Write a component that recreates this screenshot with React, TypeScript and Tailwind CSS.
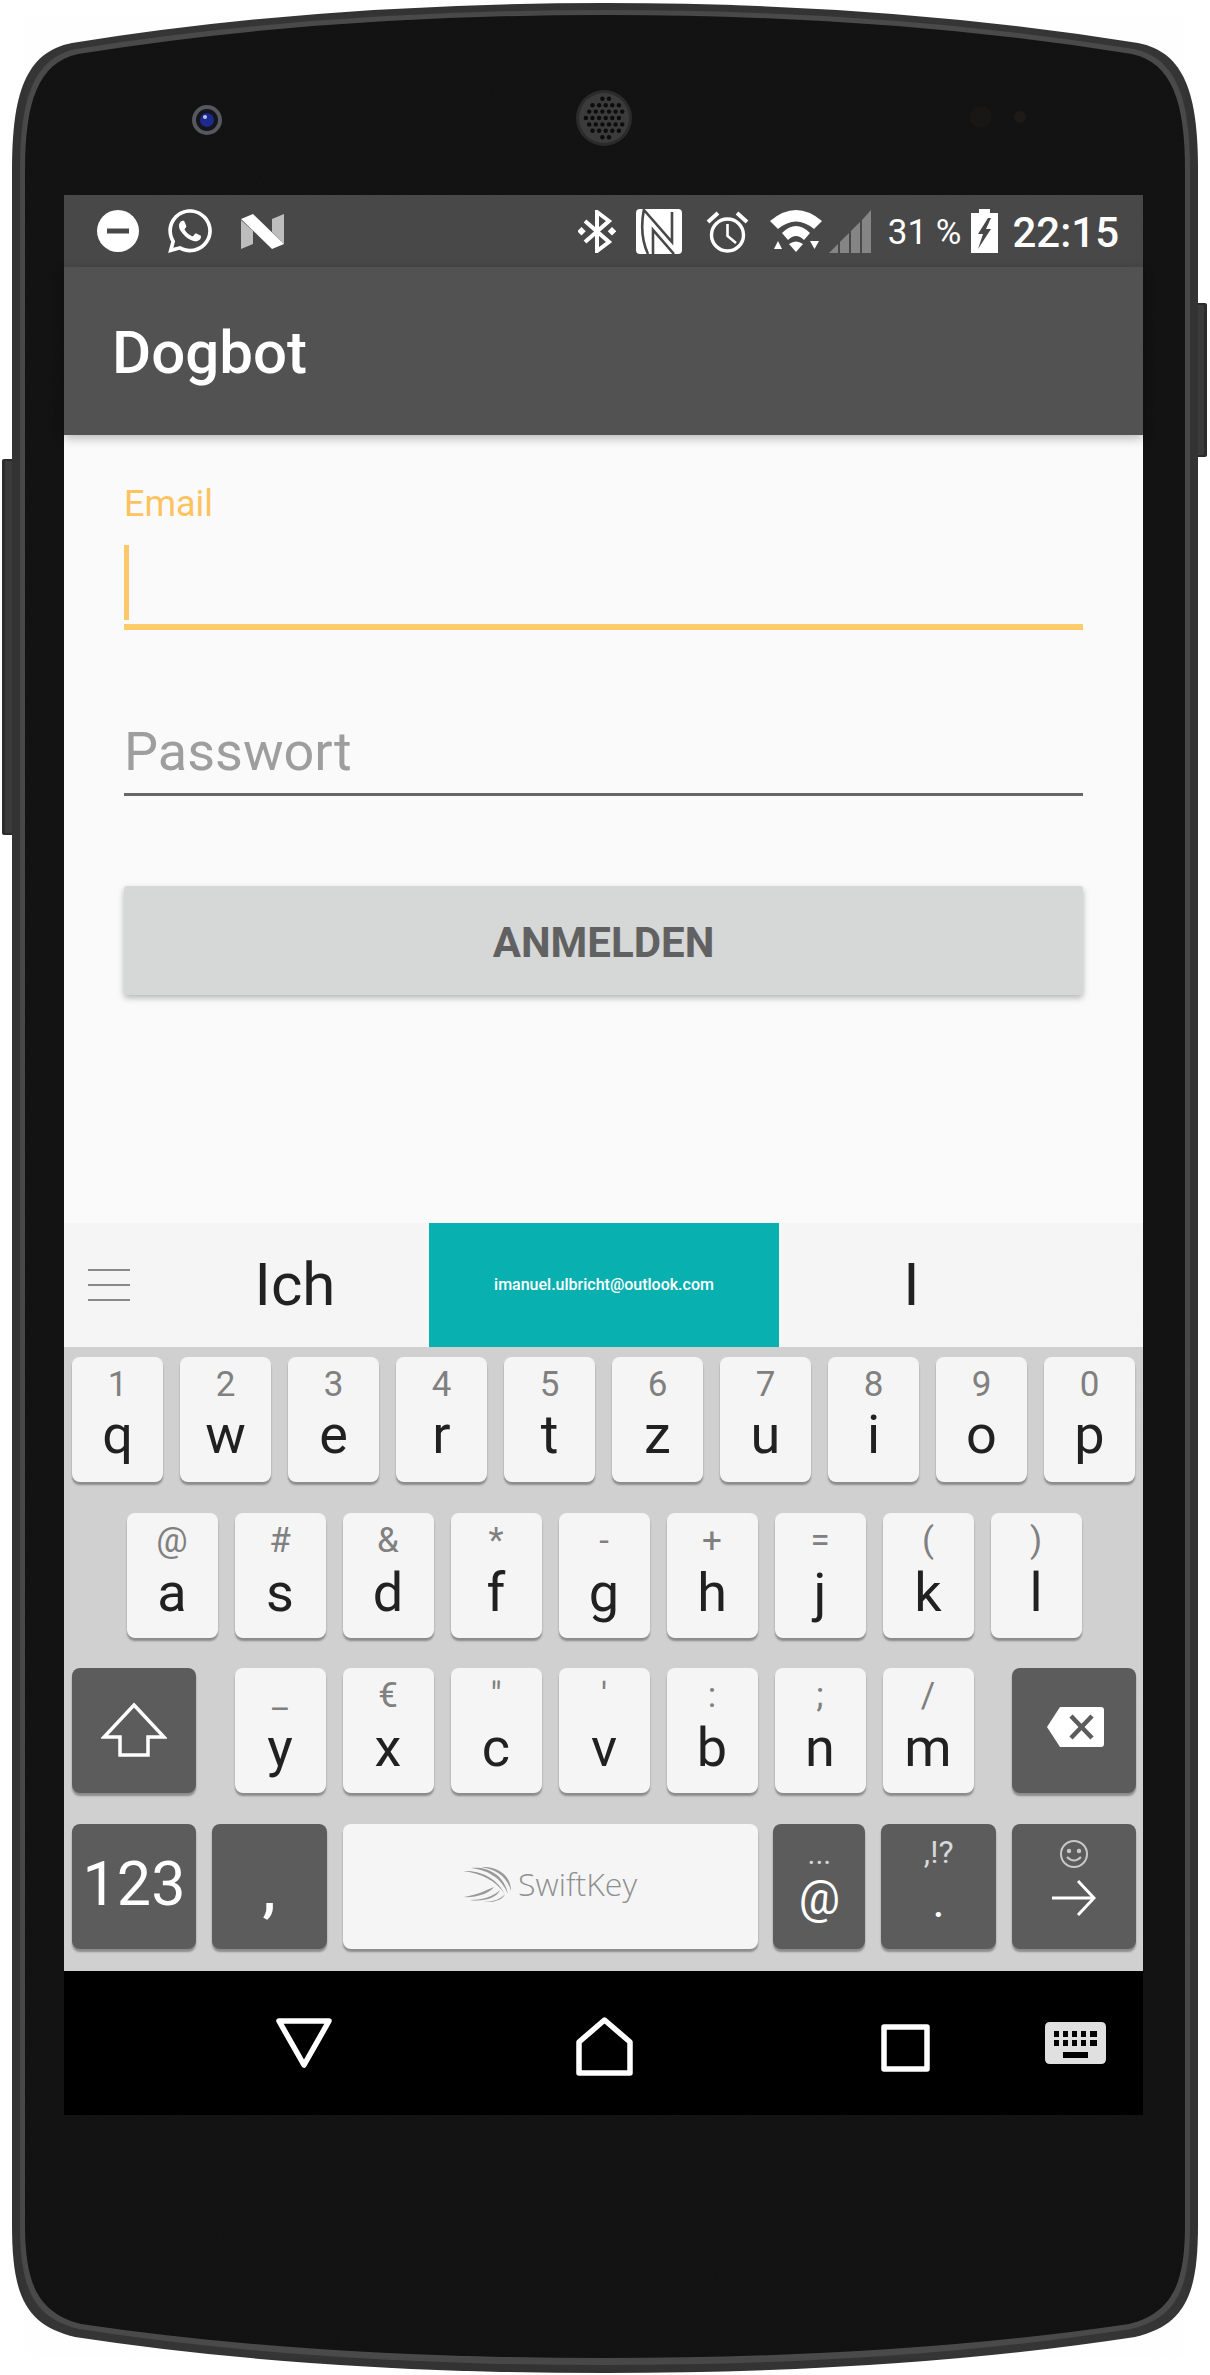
import { FaWhatsapp } from 'react-icons/fa'

const rows = [
  [['1', 'q'], ['2', 'w'], ['3', 'e'], ['4', 'r'], ['5', 't'], ['6', 'z'], ['7', 'u'], ['8', 'i'], ['9', 'o'], ['0', 'p']],
  [['@', 'a'], ['#', 's'], ['&', 'd'], ['*', 'f'], ['-', 'g'], ['+', 'h'], ['=', 'j'], ['(', 'k'], [')', 'l']],
]
const row3 = [['_', 'y'], ['€', 'x'], ['"', 'c'], ["'", 'v'], [':', 'b'], [';', 'n'], ['/', 'm']]

const lightKey = 'h-[125px] rounded-lg bg-[#f5f5f5] shadow-[0_3px_2px_rgba(0,0,0,0.33)]'
const darkKey = 'h-[125px] rounded-lg bg-[#5c5c5c] shadow-[0_3px_2px_rgba(0,0,0,0.33)]'

const Key = ({ top, main, low }: { top: string; main: string; low?: boolean }) => (
  <div className={`${lightKey} w-[91px] flex flex-col items-center`}>
    <span className="h-[56px] text-[35px] leading-[56px] text-[#808080]">{top}</span>
    <span className={low ? 'mt-[2px] h-[43px] text-[54px] leading-[43px] text-[#212121]' : 'h-[43px] text-[54px] leading-[43px] text-[#212121]'}>{main}</span>
  </div>
)

const outerPath =
  'M72 43 Q320 3 605 3 Q890 3 1138 43 C1185 52 1198 95 1198 170 L1198 2225 C1198 2295 1185 2325 1135 2337 Q900 2373 605 2373 Q310 2373 75 2337 C25 2325 12 2295 12 2225 L12 170 C12 95 25 52 72 43 Z'
const midPath =
  'M76 49 Q320 10 605 10 Q890 10 1134 49 C1177 58 1190 100 1190 170 L1190 2225 C1190 2288 1177 2318 1131 2329 Q900 2365 605 2365 Q310 2365 79 2329 C33 2318 20 2288 20 2225 L20 170 C20 100 33 58 76 49 Z'
const innerPath =
  'M78 54 Q320 15 605 15 Q890 15 1132 54 C1172 63 1185 102 1185 170 L1185 2225 C1185 2284 1172 2313 1129 2324 Q900 2358 605 2358 Q310 2358 81 2324 C38 2313 25 2284 25 2225 L25 170 C25 102 38 63 78 54 Z'

const Shell = () => (
  <svg className="absolute left-0 top-0" width="1210" height="2375" viewBox="0 0 1210 2375">
    <defs>
      <filter id="grain" x="0" y="0" width="100%" height="100%">
        <feTurbulence type="fractalNoise" baseFrequency="0.9" numOctaves="2" seed="4" />
        <feColorMatrix values="0 0 0 0 0.5  0 0 0 0 0.5  0 0 0 0 0.5  0 0 0 0.03 0" />
      </filter>
    </defs>
    <rect x="2" y="459" width="14" height="376" rx="2" fill="#2c2c2c" />
    <rect x="5" y="461" width="9" height="372" fill="#3b3b3b" />
    <rect x="1194" y="303" width="13" height="154" rx="2" fill="#2c2c2c" />
    <rect x="1196" y="305" width="8" height="150" fill="#3b3b3b" />
    <path d={outerPath} fill="#333333" />
    <path d={midPath} fill="#484848" />
    <path d={innerPath} fill="#101010" />
    <path d={innerPath} filter="url(#grain)" />
    {/* front camera */}
    <circle cx="207" cy="120" r="15" fill="#55585c" />
    <circle cx="207" cy="120" r="11" fill="#15151c" />
    <circle cx="207" cy="120" r="7" fill="#1c2a8c" />
    <circle cx="205" cy="117" r="2" fill="#b6c3f2" />
    {/* earpiece */}
    <circle cx="604" cy="118" r="28" fill="#2b2b2b" />
    <circle cx="604" cy="118" r="25" fill="#3b3b3b" />
    {Array.from({ length: 7 }).flatMap((_, r) =>
      Array.from({ length: 7 }).map((_, c) => {
        const x = (c - 3) * 6.6 + (r % 2 ? 3.3 : 0) - 1.6
        const y = (r - 3) * 6.4
        if (x * x + y * y > 400) return null
        return <circle key={`${r}-${c}`} cx={604 + x} cy={118 + y} r="2.2" fill="#0c0c0c" />
      }),
    )}
    {/* sensors */}
    <circle cx="981" cy="117" r="11" fill="#191715" />
    <circle cx="1020" cy="117" r="6" fill="#1e1a17" />
  </svg>
)

const StatusLeft = () => (
  <div className="flex items-center">
    <svg className="ml-[33px]" width="42" height="42" viewBox="0 0 42 42">
      <circle cx="21" cy="21" r="21" fill="#fff" />
      <rect x="10" y="18.5" width="22" height="5" fill="#484848" />
    </svg>
    <FaWhatsapp className="ml-[26px] text-white" size={50} />
    <svg className="ml-[26px]" width="43" height="35" viewBox="0 0 43 35">
      <polygon points="0,6 12,17 12,30 0,35" fill="#bdbdbd" />
      <polygon points="31,5 43,0 43,30 31,18" fill="#bdbdbd" />
      <polygon points="0,5 12,0 43,30 31,35" fill="#fff" />
    </svg>
  </div>
)

const StatusRight = () => (
  <div className="flex items-center pr-[24px] text-white">
    <svg width="38" height="43" viewBox="0 0 38 43" fill="none" stroke="#fff" strokeWidth="4">
      <path d="M7 11 L31 32 L19 41 V2 L31 11 L7 32" />
      <rect x="0" y="0" width="6" height="6" transform="translate(3.5 17) rotate(45)" fill="#fff" stroke="none" />
      <rect x="0" y="0" width="6" height="6" transform="translate(34 17) rotate(45)" fill="#fff" stroke="none" />
    </svg>
    <svg className="ml-[20px]" width="46" height="45" viewBox="0 0 46 45">
      <rect width="46" height="45" rx="4" fill="#fff" />
      <path d="M8 0 C5 15 6 32 12 45 M8 1 L36 33 V3 M38 45 L17 21 V45" fill="none" stroke="#484848" strokeWidth="2.6" />
    </svg>
    <svg className="ml-[24px]" width="43" height="43" viewBox="0 0 43 43" fill="none" stroke="#fff" strokeWidth="3.4">
      <circle cx="21.5" cy="25" r="16" />
      <path d="M21.5 14 V26 L30 33" strokeWidth="2.6" />
      <path d="M2 12 L12 3 M41 12 L31 3" strokeWidth="4" />
    </svg>
    <svg className="ml-[21px]" width="52" height="43" viewBox="0 0 52 43" fill="#fff">
      <path d="M0 11 Q26 -11 52 11 L44 19 Q26 4 8 19 Z" />
      <path d="M12 23 Q26 9 40 23 L34 30 Q26 22 18 30 Z" />
      <path d="M19 34 Q26 29 33 34 L26 42 Z" />
      <polygon points="8,31 12,39 4,39" />
      <polygon points="40,31 49,31 44.5,39" />
    </svg>
    <svg className="ml-[7px]" width="42" height="43" viewBox="0 0 42 43" fill="#858585">
      <polygon points="0,43 9,34 9,43" />
      <polygon points="11,43 11,32 20,23 20,43" />
      <polygon points="22,43 22,21 31,12 31,43" />
      <polygon points="33,43 33,10 42,0 42,43" />
    </svg>
    <span className="ml-[17px] pt-[2px] text-[35px] leading-none">31 %</span>
    <svg className="ml-[10px]" width="27" height="44" viewBox="0 0 27 44">
      <rect x="8" width="11" height="5" fill="#fff" />
      <rect y="4" width="27" height="40" fill="#fff" />
      <polygon points="17,9 7,25 12,25 7,40 20,20 15,20 20,9" fill="#484848" />
    </svg>
    <span className="ml-[14px] pt-[3px] text-[42px] font-medium leading-none">22:15</span>
  </div>
)

const SwiftLogo = () => (
  <svg width="49" height="35" viewBox="0 0 49 35" fill="#999">
    <path d="M0 4 C14 3 34 9 42 28 C34 13 16 6 0 4 Z" />
    <path d="M8 1 C22 -1 41 6 45 27 C38 10 24 3 8 1 Z" />
    <path d="M18 0 C34 -1 48 8 48 24 C44 9 32 2 18 0 Z" />
    <path d="M0 30 C10 29 22 24 31 20 C26 27 12 31 0 30 Z" />
    <path d="M7 33 C18 33 30 30 37 23 C34 31 20 35 7 33 Z" />
    <path d="M20 35 C30 35 38 32 42 27 C40 33 30 36 20 35 Z" />
  </svg>
)

export default function App() {
  return (
    <div className="relative w-[1210px] h-[2375px] bg-white overflow-hidden pt-[195px] pl-[64px] font-[Roboto,sans-serif]">
      <Shell />
      <div className="relative w-[1079px] flex flex-col">
        <div className="h-[72px] bg-[#484848] flex items-center justify-between">
          <StatusLeft />
          <StatusRight />
        </div>
        <div className="relative z-10 h-[168px] bg-[#525252] flex items-center pl-[48px] pt-[3px] text-[60px] font-medium text-white shadow-[0_3px_10px_rgba(0,0,0,0.28)]">
          Dogbot
        </div>

        <div className="h-[788px] bg-[#fafafa] px-[60px] pt-[49px] flex flex-col">
          <label className="h-[40px] text-[36px] leading-[40px] text-[#fdc35f]">Email</label>
          <div className="mt-[21px] h-[85px] border-b-[6px] border-[#fccb6a]">
            <div className="w-[5px] h-[75px] bg-[#fcc869]" />
          </div>
          <div className="mt-[97px] h-[69px] pb-[10px] border-b-[3px] border-[#666666] text-[54px] leading-[49px] text-[#9e9e9e]">
            Passwort
          </div>
          <button className="mt-[90px] h-[109px] pt-[3px] rounded-[3px] bg-[#d6d7d7] text-[42px] font-bold text-[#616161] shadow-[0_3px_6px_rgba(0,0,0,0.28)]">
            ANMELDEN
          </button>
        </div>

        <div className="h-[124px] bg-[#f5f5f5] flex">
          <div className="w-[130px] pl-[24px] flex flex-col justify-center gap-[13px] pb-[1px]">
            <div className="w-[42px] h-[2px] bg-[#8a8a8a]" />
            <div className="w-[42px] h-[2px] bg-[#8a8a8a]" />
            <div className="w-[42px] h-[2px] bg-[#8a8a8a]" />
          </div>
          <div className="w-[235px] flex items-center justify-center pr-[33px] text-[60px] text-[#212121]">Ich</div>
          <div className="w-[350px] bg-[#09b0b0] flex items-center justify-center text-[16px] font-medium text-white">
            imanuel.ulbricht@outlook.com
          </div>
          <div className="flex-1 flex items-center justify-center pr-[99px] text-[60px] text-[#212121]">I</div>
        </div>

        <div className="h-[624px] bg-[#d0d0d0] pl-[8px] pr-[7px] pt-[10px] flex flex-col gap-[30.7px]">
          <div className="flex gap-[17px]">
            {rows[0].map(([t, m]) => <Key key={m} top={t} main={m} />)}
          </div>
          <div className="flex justify-center gap-[17px]">
            {rows[1].map(([t, m]) => <Key key={m} top={t} main={m} low />)}
          </div>
          <div className="flex justify-between">
            <div className={`${darkKey} w-[124px] flex items-center justify-center pb-[2px]`}>
              <svg width="66" height="56" viewBox="0 0 66 56" fill="none" stroke="#fff" strokeWidth="3.5">
                <path d="M33 3 L63 35 H47 V53 H19 V35 H3 Z" />
              </svg>
            </div>
            <div className="flex gap-[17px]">
              {row3.map(([t, m]) => <Key key={m} top={t} main={m} low />)}
            </div>
            <div className={`${darkKey} w-[124px] flex items-center justify-center pl-[3px] pb-[7px]`}>
              <svg width="57" height="40" viewBox="0 0 57 40">
                <path d="M13 0 H54 Q57 0 57 3 V37 Q57 40 54 40 H13 L0 20 Z" fill="#fff" />
                <path d="M24 9 L45 31 M45 9 L24 31" stroke="#5c5c5c" strokeWidth="4.5" />
              </svg>
            </div>
          </div>
          <div className="flex gap-[15.8px]">
            <div className={`${darkKey} w-[124px] flex items-center justify-center pb-[3px] text-[61px] text-white`}>123</div>
            <div className={`${darkKey} w-[115px] flex items-center justify-center text-[62px] font-medium text-white pt-[4px]`}>,</div>
            <div className={`${lightKey} w-[415px] flex items-center justify-center gap-[6px] pb-[5px]`}>
              <SwiftLogo />
              <span className="font-['Open_Sans',sans-serif] font-light text-[32px] leading-none text-[#8f8f8f]">SwiftKey</span>
            </div>
            <div className={`${darkKey} w-[92px] flex flex-col items-center text-white`}>
              <span className="h-[56px] text-[30px] leading-[60px] text-[#d8d8d8]">...</span>
              <span className="h-[43px] text-[46px] leading-[37px]">@</span>
            </div>
            <div className={`${darkKey} w-[115px] flex flex-col items-center text-white`}>
              <span className="h-[56px] text-[32px] leading-[56px] text-[#d8d8d8]">,!?</span>
              <span className="h-[43px] text-[46px] leading-[43px]">.</span>
            </div>
            <div className={`${darkKey} w-[124px] flex flex-col items-center pt-[15px] gap-[11px]`}>
              <svg width="30" height="30" viewBox="0 0 30 30" fill="none" stroke="#c8c8c8" strokeWidth="2">
                <circle cx="15" cy="15" r="13" />
                <circle cx="10" cy="12" r="1.2" fill="#c8c8c8" />
                <circle cx="20" cy="12" r="1.2" fill="#c8c8c8" />
                <path d="M8 18 Q15 25 22 18" />
              </svg>
              <svg width="44" height="36" viewBox="0 0 44 36" fill="none" stroke="#fff" strokeWidth="3">
                <path d="M0 18 H42 M26 1 L42 18 L26 35" />
              </svg>
            </div>
          </div>
        </div>

        <div className="h-[144px] bg-black flex items-start">
          <svg className="ml-[212px] mt-[47px]" width="56" height="50" viewBox="0 0 56 50" fill="none" stroke="#fff" strokeWidth="5.5" strokeLinejoin="round">
            <path d="M3 3 H53 L28 47 Z" />
          </svg>
          <svg className="ml-[244px] mt-[46px]" width="57" height="59" viewBox="0 0 57 59" fill="none" stroke="#fff" strokeWidth="5.5" strokeLinejoin="round">
            <path d="M28.5 3 L54 25 V56 H3 V25 Z" />
          </svg>
          <svg className="ml-[248px] mt-[53px]" width="49" height="48" viewBox="0 0 49 48" fill="none" stroke="#fff" strokeWidth="5.5" strokeLinejoin="round">
            <rect x="3" y="3" width="43" height="42" />
          </svg>
          <svg className="ml-[115px] mt-[51px]" width="61" height="42" viewBox="0 0 61 42" fill="#e0e0e0">
            <path fillRule="evenodd" d="M5 0 H56 Q61 0 61 5 V37 Q61 42 56 42 H5 Q0 42 0 37 V5 Q0 0 5 0 Z M9 9 V15 H14 V9 Z M18 9 V15 H23 V9 Z M27 9 V15 H32 V9 Z M36 9 V15 H41 V9 Z M45 9 V15 H52 V9 Z M9 18 V24 H14 V18 Z M18 18 V24 H23 V18 Z M27 18 V24 H32 V18 Z M36 18 V24 H41 V18 Z M45 18 V24 H52 V18 Z M18 30 V36 H43 V30 Z" />
          </svg>
        </div>
      </div>
    </div>
  )
}
